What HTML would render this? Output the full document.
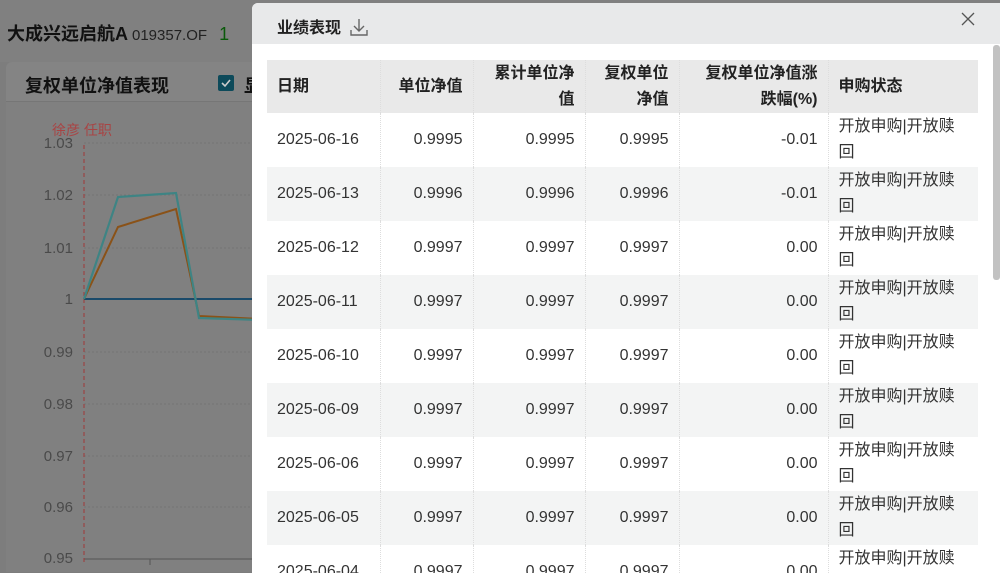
<!DOCTYPE html>
<html><head><meta charset="utf-8"><style>
*{margin:0;padding:0;box-sizing:border-box}
body{width:1000px;height:565px;overflow:hidden;position:relative;background:#7d7d7d;font-family:"Liberation Sans","Noto Sans CJK SC",sans-serif}
.top{position:absolute;left:0;top:0;width:1000px;height:62px;background:#808080}
.ttl{position:absolute;left:7px;top:20px;font-size:18px;font-weight:bold;color:#111}
.ttl span{font-weight:normal;font-size:15px;color:#222;margin-left:4px}
.ttl b{color:#0a5a0a;font-weight:normal;margin-left:12px}
.card{position:absolute;left:6px;top:62px;width:260px;height:510px;background:#808080;border-top-left-radius:6px}
.ch{position:absolute;left:6px;top:62px;width:260px;height:40px;background:#848484;border-bottom:1px solid #767676;border-top-left-radius:6px}
.ch .t{position:absolute;left:19px;top:10px;font-size:18px;font-weight:bold;color:#111}
.ch .cb{position:absolute;left:212px;top:13px;width:16px;height:16px;background:#0d4a5a;border-radius:2px}
.ch .g{position:absolute;left:238px;top:10px;font-size:18px;font-weight:bold;color:#111}
.modal{position:absolute;left:252px;top:3px;width:760px;height:570px;background:#fff;border-radius:6px 0 0 0;overflow:hidden}
.mh{height:41px;background:#e8e9ea;position:relative}
.mh .t{position:absolute;left:25px;top:11px;font-size:16px;font-weight:bold;color:#222}
.mh .x{position:absolute;left:708px;top:8px}
table{position:absolute;left:15px;top:57px;border-collapse:collapse;font-size:16px;color:#333}
td,th{height:54px;border-right:1px dotted #ddd;padding:0 10px;text-align:right;vertical-align:middle}
th{background:#e9e9e9;font-weight:bold;color:#222;line-height:26px;height:53px}
td:last-child,th:last-child{text-align:left;border-right:none;line-height:26px;padding-right:4px}
td:first-child,th:first-child{text-align:left}
tr:nth-child(odd) td{background:#f3f4f4}
.sb{position:absolute;left:993px;top:45px;width:7px;height:235px;background:#c2c2c2;border-radius:3px}
</style></head><body>
<div class="top"><div class="ttl">大成兴远启航A<span>019357.OF</span><b>1</b></div></div>
<div class="card"></div>
<div class="ch"><div class="t">复权单位净值表现</div><div class="cb"><svg width="16" height="16"><path d="M4 8l3 3 5-6" stroke="#ccc" stroke-width="1.6" fill="none"/></svg></div><div class="g">显</div></div>
<svg style="position:absolute;left:0;top:0" width="260" height="565">
<g stroke="#747474" stroke-width="1" stroke-dasharray="2,2">
<line x1="84" y1="143" x2="260" y2="143"/><line x1="84" y1="195" x2="260" y2="195"/><line x1="84" y1="248" x2="260" y2="248"/>
<line x1="84" y1="352" x2="260" y2="352"/><line x1="84" y1="404" x2="260" y2="404"/><line x1="84" y1="456" x2="260" y2="456"/><line x1="84" y1="507" x2="260" y2="507"/></g>
<line x1="84" y1="559" x2="260" y2="559" stroke="#555"/><line x1="150" y1="559" x2="150" y2="565" stroke="#555"/>
<line x1="84" y1="145" x2="84" y2="565" stroke="#a03838" stroke-dasharray="4,3"/>
<text x="52" y="135" fill="#a84444" font-size="14" font-family="Liberation Sans,Noto Sans CJK SC,sans-serif">徐彦 任职</text>
<g fill="#4a4a4a" font-size="15" text-anchor="end" font-family="Liberation Sans,sans-serif">
<text x="73" y="148">1.03</text><text x="73" y="200">1.02</text><text x="73" y="253">1.01</text><text x="73" y="304">1</text>
<text x="73" y="357">0.99</text><text x="73" y="409">0.98</text><text x="73" y="461">0.97</text><text x="73" y="512">0.96</text><text x="73" y="563">0.95</text></g>
<polyline points="84,299 260,299" stroke="#1a4a6a" stroke-width="2" fill="none"/>
<polyline points="84,299 118,227 176,209 199,316 260,319" stroke="#8a5218" stroke-width="2" fill="none"/>
<polyline points="84,299 118,197 176,193 199,318 260,320" stroke="#3e8484" stroke-width="2.2" fill="none"/>
</svg>
<div class="modal">
<div class="mh"><div class="t">业绩表现 <svg width="20" height="18" style="vertical-align:-3px;margin-left:4px"><path d="M10 1v11M5 8l5 5 5-5M2 12v5h16v-5" stroke="#666" stroke-width="1.4" fill="none"/></svg></div><div class="x"><svg width="16" height="16"><path d="M2 2l12 12M14 2L2 14" stroke="#555" stroke-width="1.3"/></svg></div></div>
<table>
<tr><th style="width:113px">日期</th><th style="width:93px">单位净值</th><th style="width:112px">累计单位净<br>值</th><th style="width:94px">复权单位<br>净值</th><th style="width:149px">复权单位净值涨<br>跌幅(%)</th><th style="width:150px">申购状态</th></tr>
<tr><td>2025-06-16</td><td>0.9995</td><td>0.9995</td><td>0.9995</td><td>-0.01</td><td>开放申购|开放赎<br>回</td></tr>
<tr><td>2025-06-13</td><td>0.9996</td><td>0.9996</td><td>0.9996</td><td>-0.01</td><td>开放申购|开放赎<br>回</td></tr>
<tr><td>2025-06-12</td><td>0.9997</td><td>0.9997</td><td>0.9997</td><td>0.00</td><td>开放申购|开放赎<br>回</td></tr>
<tr><td>2025-06-11</td><td>0.9997</td><td>0.9997</td><td>0.9997</td><td>0.00</td><td>开放申购|开放赎<br>回</td></tr>
<tr><td>2025-06-10</td><td>0.9997</td><td>0.9997</td><td>0.9997</td><td>0.00</td><td>开放申购|开放赎<br>回</td></tr>
<tr><td>2025-06-09</td><td>0.9997</td><td>0.9997</td><td>0.9997</td><td>0.00</td><td>开放申购|开放赎<br>回</td></tr>
<tr><td>2025-06-06</td><td>0.9997</td><td>0.9997</td><td>0.9997</td><td>0.00</td><td>开放申购|开放赎<br>回</td></tr>
<tr><td>2025-06-05</td><td>0.9997</td><td>0.9997</td><td>0.9997</td><td>0.00</td><td>开放申购|开放赎<br>回</td></tr>
<tr><td>2025-06-04</td><td>0.9997</td><td>0.9997</td><td>0.9997</td><td>0.00</td><td>开放申购|开放赎<br>回</td></tr>
</table>
</div>
<div class="sb"></div>
</body></html>
